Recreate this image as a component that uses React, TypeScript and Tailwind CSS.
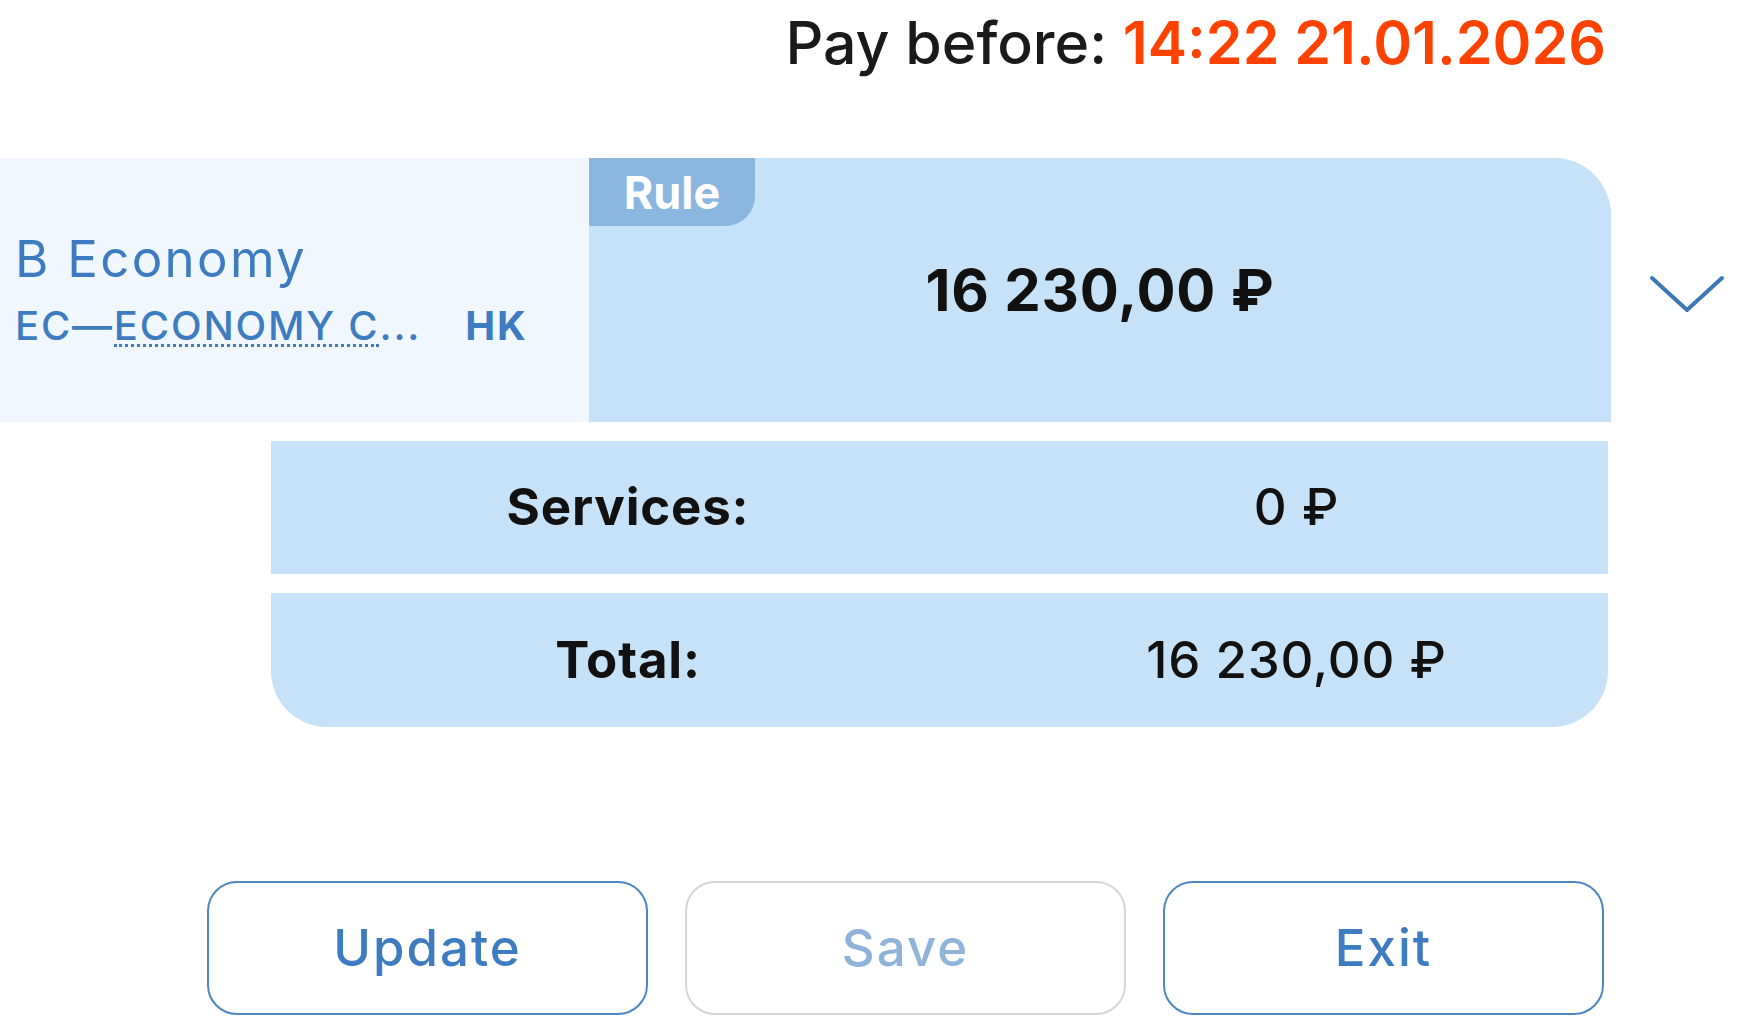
import React from "react";

const ChevronDown = () => (
  <svg width="76" height="42" viewBox="0 0 76 42" fill="none">
    <path d="M3 4 L38 36 L73 4" stroke="#3b78b8" strokeWidth="4" strokeLinecap="round" strokeLinejoin="round" />
  </svg>
);

const App = () => {
  const buttons = [
    { label: "Update", disabled: false },
    { label: "Save", disabled: true },
    { label: "Exit", disabled: false },
  ];

  return (
    <div className="w-full h-[1029px] bg-white overflow-hidden" style={{ fontFamily: "Inter, 'Liberation Sans', sans-serif" }}>
      {/* Pay before */}
      <div className="flex justify-end pr-[131px] pt-[14px]">
        <div className="text-[59px] leading-[58px] font-medium text-[#1a1a1a]">
          Pay before: <span className="font-semibold text-[#ff4200]">14:22 21.01.2026</span>
        </div>
      </div>

      {/* Fare card */}
      <div className="flex items-center mt-[86px]">
        <div className="flex w-[1611px] h-[264px]">
          <div className="w-[589px] bg-[#f0f7fe] flex flex-col justify-center pl-[15px] gap-[22px] text-[#3d7cc0]">
            <div className="text-[51px] leading-[50px] tracking-[2.3px]">B Economy</div>
            <div className="flex items-baseline text-[40px] leading-[40px] font-medium tracking-[1.8px]">
              <span>EC—</span>
              <span className="border-b-[3px] border-dotted border-[#3d7cc0] leading-[36px]">ECONOMY C</span>
              <span>...</span>
              <span className="ml-[44px] font-bold">HK</span>
            </div>
          </div>
          <div className="flex-1 relative bg-[#c5e2f8] rounded-tr-[57px] flex items-center justify-center">
            <div className="absolute top-0 left-0 w-[166px] h-[68px] bg-[#8ab6df] rounded-br-[30px] flex items-center justify-center">
              <span className="text-white font-bold text-[45px] leading-none">Rule</span>
            </div>
            <div className="text-[58px] font-bold text-[#111] tracking-[0.8px]">16 230,00 ₽</div>
          </div>
        </div>
        <div className="ml-[38px] mt-[10px]">
          <ChevronDown />
        </div>
      </div>

      {/* Services / Total */}
      <div className="ml-[271px] w-[1337px] mt-[19px] flex flex-col gap-[19px]">
        <div className="h-[133px] bg-[#c5e2f8] flex items-center text-[51px] tracking-[0.8px]">
          <div className="w-[714px] text-center font-bold text-[#111]">Services:</div>
          <div className="flex-1 text-center font-medium text-[#111]">0 ₽</div>
        </div>
        <div className="h-[134px] bg-[#c5e2f8] rounded-b-[56px] flex items-center text-[51px] tracking-[0.8px]">
          <div className="w-[714px] text-center font-bold text-[#111]">Total:</div>
          <div className="flex-1 text-center font-medium text-[#111]">16 230,00 ₽</div>
        </div>
      </div>

      {/* Actions */}
      <div className="ml-[207px] mt-[154px] flex gap-[37px]">
        {buttons.map((b) => (
          <button
            key={b.label}
            className={`w-[441px] h-[134px] rounded-[30px] border-2 bg-white text-[51px] font-medium tracking-[2px] ${
              b.disabled ? "border-[#d6d6d6] text-[#8fb3d9]" : "border-[#4d86c3] text-[#3d7cc0]"
            }`}
          >
            {b.label}
          </button>
        ))}
      </div>
    </div>
  );
};

export default App;
